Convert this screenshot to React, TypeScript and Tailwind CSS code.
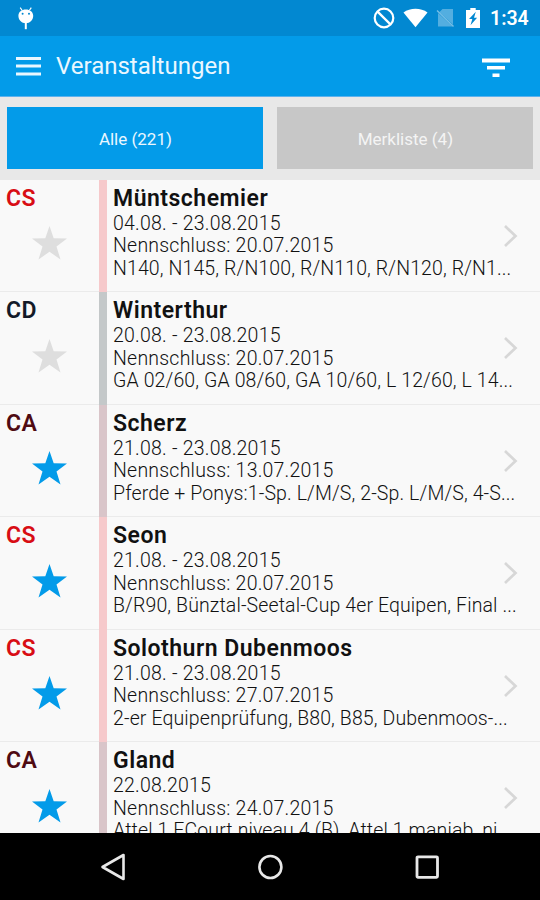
import { useState } from 'react';
import clsx from 'clsx';

type Category = 'CS' | 'CD' | 'CA';

interface EventItem {
  category: Category;
  title: string;
  date: string;
  deadline: string;
  classes: string;
  starred: boolean;
}

const events: EventItem[] = [
  {
    category: 'CS',
    title: 'Müntschemier',
    date: '04.08. - 23.08.2015',
    deadline: '20.07.2015',
    classes: 'N140, N145, R/N100, R/N110, R/N120, R/N1...',
    starred: false,
  },
  {
    category: 'CD',
    title: 'Winterthur',
    date: '20.08. - 23.08.2015',
    deadline: '20.07.2015',
    classes: 'GA 02/60, GA 08/60, GA 10/60, L 12/60, L 14...',
    starred: false,
  },
  {
    category: 'CA',
    title: 'Scherz',
    date: '21.08. - 23.08.2015',
    deadline: '13.07.2015',
    classes: 'Pferde + Ponys:1-Sp. L/M/S, 2-Sp. L/M/S, 4-S...',
    starred: true,
  },
  {
    category: 'CS',
    title: 'Seon',
    date: '21.08. - 23.08.2015',
    deadline: '20.07.2015',
    classes: 'B/R90, Bünztal-Seetal-Cup 4er Equipen, Final ...',
    starred: true,
  },
  {
    category: 'CS',
    title: 'Solothurn Dubenmoos',
    date: '21.08. - 23.08.2015',
    deadline: '27.07.2015',
    classes: '2-er Equipenprüfung, B80, B85, Dubenmoos-...',
    starred: true,
  },
  {
    category: 'CA',
    title: 'Gland',
    date: '22.08.2015',
    deadline: '24.07.2015',
    classes: 'Attel 1 ECourt niveau 4 (B), Attel 1 maniab, ni...',
    starred: true,
  },
];

const categoryText: Record<Category, string> = {
  CS: 'text-[#d80d14]',
  CD: 'text-[#131a28]',
  CA: 'text-[#4f0b12]',
};

const categoryBar: Record<Category, string> = {
  CS: 'bg-[#f6c9cb]',
  CD: 'bg-[#c4c8c9]',
  CA: 'bg-[#d9c5c9]',
};

const StatusBar = () => (
  <div className="flex h-9 shrink-0 items-center bg-[#0288d1] text-white">
    <svg className="ml-[17px] h-6 w-[18px]" viewBox="0 0 18 24" fill="currentColor">
      <path d="M3.2 1.7 5.2 4.5M14.3 1.7 12.3 4.5" stroke="currentColor" strokeWidth="1.2" />
      <path d="M1.4 9.8C1.4 5.8 4.6 3.4 8.8 3.4s7.4 2.4 7.4 6.4c0 4.2-3.2 7.5-7.4 7.5s-7.4-3.3-7.4-7.5Z" />
      <path d="M8.8 16v7.2" stroke="currentColor" strokeWidth="2" />
      <circle cx="5.6" cy="7.8" r="1" fill="#0288d1" />
      <circle cx="12" cy="7.8" r="1" fill="#0288d1" />
    </svg>
    <svg className="ml-auto h-[22px] w-[22px]" viewBox="0 0 22 22" fill="none" stroke="currentColor" strokeWidth="2.2">
      <circle cx="11" cy="11" r="9.3" />
      <path d="m4.6 4.6 12.8 12.8" />
    </svg>
    <svg className="ml-[8px] h-5 w-[25px]" viewBox="0 0 26 20" fill="currentColor">
      <path d="M0.5 4.2C7.5-1 18.5-1 25.5 4.2L13 19.6Z" />
    </svg>
    <svg className="ml-[8px] h-5 w-[20px]" viewBox="0 0 20 20">
      <path d="M6.5 1H17v15.5L3.5 4Z M2 5v13.5h14.5Z" fill="#fff" fillOpacity="0.32" />
      <path d="m1 2.5 16.5 16" stroke="#fff" strokeOpacity="0.45" strokeWidth="1.5" />
    </svg>
    <svg className="ml-[10px] h-[22px] w-[14px]" viewBox="0 0 14 22" fill="currentColor">
      <path d="M4.3 1h5.4v2H14v18H0V3h4.3Z" />
      <path d="M9.8 4.8 3 12h3.3l-1.8 6.2 6.6-7.4H8Z" fill="#0288d1" />
    </svg>
    <span className="ml-[10px] mr-[11px] mt-[2px] w-[39px] whitespace-nowrap text-[19.5px] font-semibold">1:34</span>
  </div>
);

const AppBar = () => (
  <div className="flex h-[61px] shrink-0 items-center border-b border-[#5db2ee] bg-[#039be9] text-[#eaf7ff]">
    <svg className="ml-[15.5px] h-5 w-[25.5px]" viewBox="0 0 25 20" preserveAspectRatio="none" fill="currentColor">
      <path d="M0 1h25v3H0zM0 8.5h25v3H0zM0 16.5h25v3H0z" />
    </svg>
    <h1 className="ml-[15px] text-[24px] font-normal">Veranstaltungen</h1>
    <svg className="ml-auto mr-[30px] mt-[3px] h-5 w-7 text-white" viewBox="0 0 28 20" fill="currentColor">
      <path d="M0 0.5h28v4H0zM5 8h18v3.6H5zM10.5 15.5h7v3.6h-7z" />
    </svg>
  </div>
);

const Star = ({ active }: { active: boolean }) => (
  <svg
    className={clsx('ml-[32px] mt-[15.5px] h-[34px] w-[35px]', active ? 'text-[#039be9]' : 'text-[#dedede]')}
    viewBox="0 0 35 34"
    fill="currentColor"
  >
    <path d="m17.5 0 4.2 12.3 13.3.2L24.5 20.6l4 12.9-11-7.8-11 7.8 4-12.9L0 12.5l13.3-.2Z" />
  </svg>
);

const EventRow = ({ item }: { item: EventItem }) => (
  <li className="flex h-[112.5px] shrink-0">
    <div className="w-[99px] shrink-0 border-b border-[#ebebeb]">
      <div
        className={clsx(
          'pl-[6px] pt-[6px] text-[23px] font-semibold leading-[25px] tracking-[0.5px]',
          categoryText[item.category]
        )}
      >
        {item.category}
      </div>
      <Star active={item.starred} />
    </div>
    <div className={clsx('w-2 shrink-0', categoryBar[item.category])} />
    <div className="flex min-w-0 flex-1 items-center border-b border-[#ebebeb]">
      <div className="h-full w-[396px] shrink-0 whitespace-pre pl-[6px] pt-[6px] text-[19.5px] font-light leading-[22.5px] tracking-[0.22px] text-[#111]">
        <div className="mb-px text-[23px] font-semibold leading-[26px] tracking-[0.5px]">{item.title}</div>
        <div>{item.date}</div>
        <div>Nennschluss: {item.deadline}</div>
        <div className="tracking-[0.12px]">{item.classes}</div>
      </div>
      <svg className="ml-px mt-px h-6 w-[14px] shrink-0" viewBox="0 0 14 24" fill="none" stroke="#d7d7d7" strokeWidth="2.7">
        <path d="m1 2 10.5 10L1 22" />
      </svg>
    </div>
  </li>
);

const NavigationBar = () => (
  <div className="flex h-[67px] shrink-0 items-center bg-black text-[#e8e8e8]">
    <svg className="ml-[100px] h-7 w-[26px]" viewBox="0 0 26 28" fill="none" stroke="currentColor" strokeWidth="2.6" strokeLinejoin="round">
      <path d="M23.5 2v24L2.5 14Z" />
    </svg>
    <svg className="ml-[131px] h-[26px] w-[26px]" viewBox="0 0 26 26" fill="none" stroke="currentColor" strokeWidth="2.6">
      <circle cx="13.4" cy="13" r="11" />
    </svg>
    <svg className="ml-[132px] h-6 w-6" viewBox="0 0 24 24" fill="none" stroke="currentColor" strokeWidth="2.8">
      <rect x="2" y="1.8" width="20.5" height="20.5" rx="1" />
    </svg>
  </div>
);

export default function App() {
  const [tab, setTab] = useState<'all' | 'saved'>('all');

  const tabClass = (active: boolean) =>
    clsx(
      'h-[62px] w-[256px] pt-[2px] text-[17px]',
      active ? 'bg-[#039be9] text-[#eaf7ff]' : 'bg-[#c7c7c7] text-[#f4f4f4]'
    );

  return (
    <div className="flex h-[900px] w-[540px] flex-col overflow-hidden bg-[#f9f9f9] font-['Roboto',sans-serif]">
      <StatusBar />
      <AppBar />
      <div className="flex h-[82.5px] shrink-0 gap-[14px] bg-[#e8e8e8] pl-[7.4px] pt-[10.4px]">
        <button type="button" className={tabClass(tab === 'all')} onClick={() => setTab('all')}>
          Alle (221)
        </button>
        <button type="button" className={tabClass(tab === 'saved')} onClick={() => setTab('saved')}>
          Merkliste (4)
        </button>
      </div>
      <ul className="flex min-h-0 flex-1 flex-col overflow-hidden">
        {events.map((item) => (
          <EventRow key={item.title} item={item} />
        ))}
      </ul>
      <NavigationBar />
    </div>
  );
}
